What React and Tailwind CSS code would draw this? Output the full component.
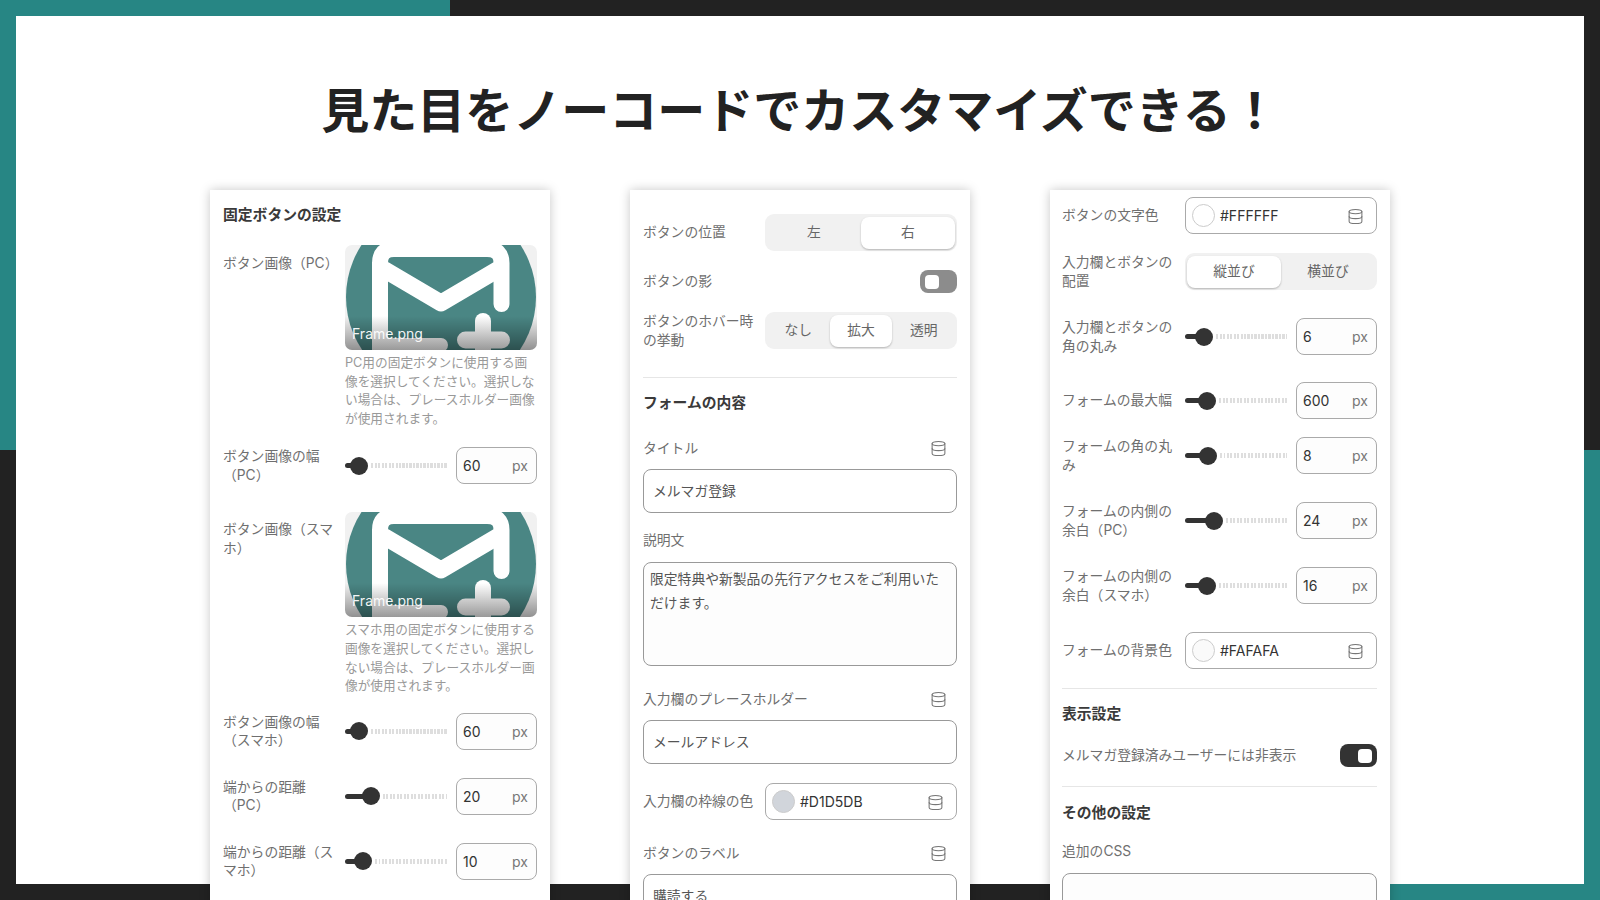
import React from 'react';
import { Database } from 'lucide-react';

const FONT = 'font-["Inter","Noto_Sans_CJK_JP",sans-serif]';

const DbIcon = () => <Database size={17} strokeWidth={1.5} className="mt-px text-[#777] shrink-0" />;

// The uploaded envelope picture, drawn by hand
const FramePreview = () => (
  <div className="relative h-[105px] w-full overflow-hidden rounded-[7px] bg-[#f1f1f1]">
    <svg viewBox="0 0 192 105" className="block w-full h-full">
      <circle cx="96" cy="52" r="95" fill="#4a8684" />
      <g fill="none" stroke="#fff" strokeLinecap="round" strokeLinejoin="round">
        <path d="M35 112V18Q35 4 49 4H142Q156.500 4 156.500 18V59" strokeWidth="16" />
        <path d="M40 25L96 58L152 25" strokeWidth="17" />
        <path d="M35 100H96" strokeWidth="14" />
        <path d="M138 76V112" strokeWidth="16" />
        <path d="M120.500 95H156.500" strokeWidth="17" />
      </g>
    </svg>
    <div className="absolute inset-x-0 bottom-0 h-[34px] bg-linear-to-t from-black/40 to-transparent" />
    <span className="absolute left-[7px] bottom-[7px] text-[14px] leading-[18px] text-white/95">Frame.png</span>
  </div>
);

const Label = ({ children }) => (
  <div className="w-[122px] shrink-0 pr-[7px] text-[13.800px] leading-[18.500px] text-[#6f6f6f]">{children}</div>
);

const Row = ({ label, className = '', children }) => (
  <div className={`flex h-[37px] shrink-0 items-center justify-between ${className}`}>
    <Label>{label}</Label>
    <div className="w-[192px] shrink-0">{children}</div>
  </div>
);

const SliderRow = ({ label, value, pos, className = '' }) => (
  <Row label={label} className={className}>
    <div className="flex items-center">
      <div className="flex w-[102px] items-center">
        <div className="h-[5px] shrink-0 rounded-l-full bg-[#333]" style={{ width: pos - 4 }} />
        <div className="-ml-[5px] size-[18px] shrink-0 rounded-full bg-[#333]" />
        <div className="ml-[3px] h-[5px] flex-1 bg-[repeating-linear-gradient(90deg,#dedede_0_2px,transparent_2px_3.500px)]" />
      </div>
      <div className="ml-[9px] flex h-[37px] w-[81px] items-center justify-between rounded-[8px] border border-[#aaa] bg-[#fdfdfd] pl-[6px] pr-[8px] text-[14px]">
        <span className="text-[#333]">{value}</span>
        <span className="text-[#777]">px</span>
      </div>
    </div>
  </Row>
);

const Segment = ({ items, active }) => (
  <div className="flex h-[37px] rounded-[9px] bg-[#f1f1f1] px-[2px] py-[2.500px] text-[13.800px] text-[#666]">
    {items.map((item, i) => (
      <div
        key={item}
        className={`flex flex-1 items-center justify-center rounded-[8px] ${i === active ? 'bg-white shadow-[0_1px_2px_rgba(0,0,0,0.25)]' : ''}`}
      >
        {item}
      </div>
    ))}
  </div>
);

const ColorField = ({ color, value }) => (
  <div className="flex h-[37px] items-center rounded-[8px] border border-[#aaa] bg-white pl-[6px] pr-[12px]">
    <div className="size-[23px] shrink-0 rounded-full border border-[#ccc]" style={{ background: color }} />
    <span className="ml-[5px] flex-1 text-[14px] text-[#333]">{value}</span>
    <DbIcon />
  </div>
);

const Toggle = ({ on }) => (
  <div className={`flex h-[23px] w-[37px] items-center rounded-[8px] ${on ? 'justify-end bg-[#333] pr-[5px]' : 'bg-[#8c8c8c] pl-[5px]'}`}>
    <div className="h-[14px] w-[14px] rounded-[4px] bg-white" />
  </div>
);

const Heading = ({ children, className = '' }) => (
  <div className={`h-6 shrink-0 text-[14.800px] leading-6 font-semibold text-[#3a3a3a] ${className}`}>{children}</div>
);

const FieldLabel = ({ children, icon, className = '' }) => (
  <div className={`flex h-5 shrink-0 items-center justify-between pr-[10px] text-[13.800px] text-[#6f6f6f] ${className}`}>
    <span>{children}</span>
    {icon && <DbIcon />}
  </div>
);

const TextInput = ({ children, className = '' }) => (
  <div className={`flex h-[44px] shrink-0 items-center rounded-[8px] border border-[#999] bg-white px-[9px] text-[13.800px] text-[#555] ${className}`}>
    {children}
  </div>
);

const Help = ({ children }) => (
  <p className="mt-[4px] text-[12.700px] leading-[18.600px] text-[#999]">{children}</p>
);

const Divider = ({ className = '' }) => <div className={`h-px shrink-0 bg-[#e6e6e6] ${className}`} />;

const Card = ({ className = '', children }) => (
  <div className={`flex h-[800px] w-[340px] shrink-0 flex-col bg-white pr-[13px] shadow-[0_0_10px_rgba(0,0,0,0.22)] ${className}`}>
    {children}
  </div>
);

export default function App() {
  return (
    <div className={`relative h-[900px] w-[1600px] overflow-hidden bg-[#222] ${FONT}`}>
      {/* corner accents behind the white sheet */}
      <div className="absolute left-0 top-0 h-[450px] w-[450px] bg-[#278684]" />
      <div className="absolute bottom-0 right-0 h-[450px] w-[450px] bg-[#278684]" />

      <div className="relative m-4 h-[868px] bg-white pt-[63px]">
        <h1 className="h-[64px] text-center text-[48px] leading-[64px] font-bold text-[#222]">
          見た目をノーコードでカスタマイズできる！
        </h1>

        <div className="mt-[47px] flex justify-center gap-[80px]">
          {/* left card */}
          <Card className="pl-[13px] pt-[13px]">
            <Heading>固定ボタンの設定</Heading>
            <div className="mt-[18px] flex items-start">
              <div className="pt-[9px]"><Label>ボタン画像（PC）</Label></div>
              <div className="w-[192px] shrink-0">
                <FramePreview />
                <Help>PC用の固定ボタンに使用する画像を選択してください。選択しない場合は、プレースホルダー画像が使用されます。</Help>
              </div>
            </div>
            <SliderRow className="mt-[19px]" label="ボタン画像の幅（PC）" value="60" pos={14} />
            <div className="mt-[28px] flex items-start">
              <div className="pt-[8px]"><Label>ボタン画像（スマホ）</Label></div>
              <div className="w-[192px] shrink-0">
                <FramePreview />
                <Help>スマホ用の固定ボタンに使用する画像を選択してください。選択しない場合は、プレースホルダー画像が使用されます。</Help>
              </div>
            </div>
            <SliderRow className="mt-[17px]" label="ボタン画像の幅（スマホ）" value="60" pos={14} />
            <SliderRow className="mt-[28px]" label="端からの距離（PC）" value="20" pos={26} />
            <SliderRow className="mt-[28px]" label="端からの距離（スマホ）" value="10" pos={18} />
          </Card>

          {/* middle card */}
          <Card className="pl-[13px] pt-[24px]">
            <Row label="ボタンの位置"><Segment items={['左', '右']} active={1} /></Row>
            <div className="mt-[19px] flex shrink-0 items-center justify-between">
              <Label>ボタンの影</Label>
              <Toggle />
            </div>
            <Row className="mt-[19px]" label="ボタンのホバー時の挙動"><Segment items={['なし', '拡大', '透明']} active={1} /></Row>
            <Divider className="mt-[28px]" />
            <Heading className="mt-[13px]">フォームの内容</Heading>
            <FieldLabel className="mt-[23px]" icon>タイトル</FieldLabel>
            <TextInput className="mt-[11px]">メルマガ登録</TextInput>
            <FieldLabel className="mt-[17px]">説明文</FieldLabel>
            <div className="mt-[12px] h-[104px] shrink-0 rounded-[8px] border border-[#999] bg-[#fdfdfd] px-[6px] pt-[4px] text-[13.800px] leading-6 text-[#555]">
              限定特典や新製品の先行アクセスをご利用いただけます。
            </div>
            <FieldLabel className="mt-[23px]" icon>入力欄のプレースホルダー</FieldLabel>
            <TextInput className="mt-[11px]">メールアドレス</TextInput>
            <Row className="mt-[19px]" label="入力欄の枠線の色"><ColorField color="#D1D5DB" value="#D1D5DB" /></Row>
            <FieldLabel className="mt-[23px]" icon>ボタンのラベル</FieldLabel>
            <TextInput className="mt-[11px]">購読する</TextInput>
          </Card>

          {/* right card */}
          <Card className="pl-[12px] pt-[7px]">
            <Row label="ボタンの文字色"><ColorField color="#FFFFFF" value="#FFFFFF" /></Row>
            <Row className="mt-[19px]" label="入力欄とボタンの配置"><Segment items={['縦並び', '横並び']} active={0} /></Row>
            <SliderRow className="mt-[28px]" label="入力欄とボタンの角の丸み" value="6" pos={19} />
            <SliderRow className="mt-[27px]" label="フォームの最大幅" value="600" pos={22} />
            <SliderRow className="mt-[18px]" label="フォームの角の丸み" value="8" pos={23} />
            <SliderRow className="mt-[28px]" label="フォームの内側の余白（PC）" value="24" pos={29} />
            <SliderRow className="mt-[28px]" label="フォームの内側の余白（スマホ）" value="16" pos={22} />
            <Row className="mt-[28px]" label="フォームの背景色"><ColorField color="#FAFAFA" value="#FAFAFA" /></Row>
            <Divider className="mt-[19px]" />
            <Heading className="mt-[13px]">表示設定</Heading>
            <div className="mt-[18px] flex shrink-0 items-center justify-between text-[13.800px] text-[#6f6f6f]">
              <span>メルマガ登録済みユーザーには非表示</span>
              <Toggle on />
            </div>
            <Divider className="mt-[19px]" />
            <Heading className="mt-[14px]">その他の設定</Heading>
            <FieldLabel className="mt-[16px]">追加のCSS</FieldLabel>
            <div className="mt-[12px] h-[110px] shrink-0 rounded-[8px] border border-[#999] bg-[#fdfdfd]" />
          </Card>
        </div>
      </div>
    </div>
  );
}
